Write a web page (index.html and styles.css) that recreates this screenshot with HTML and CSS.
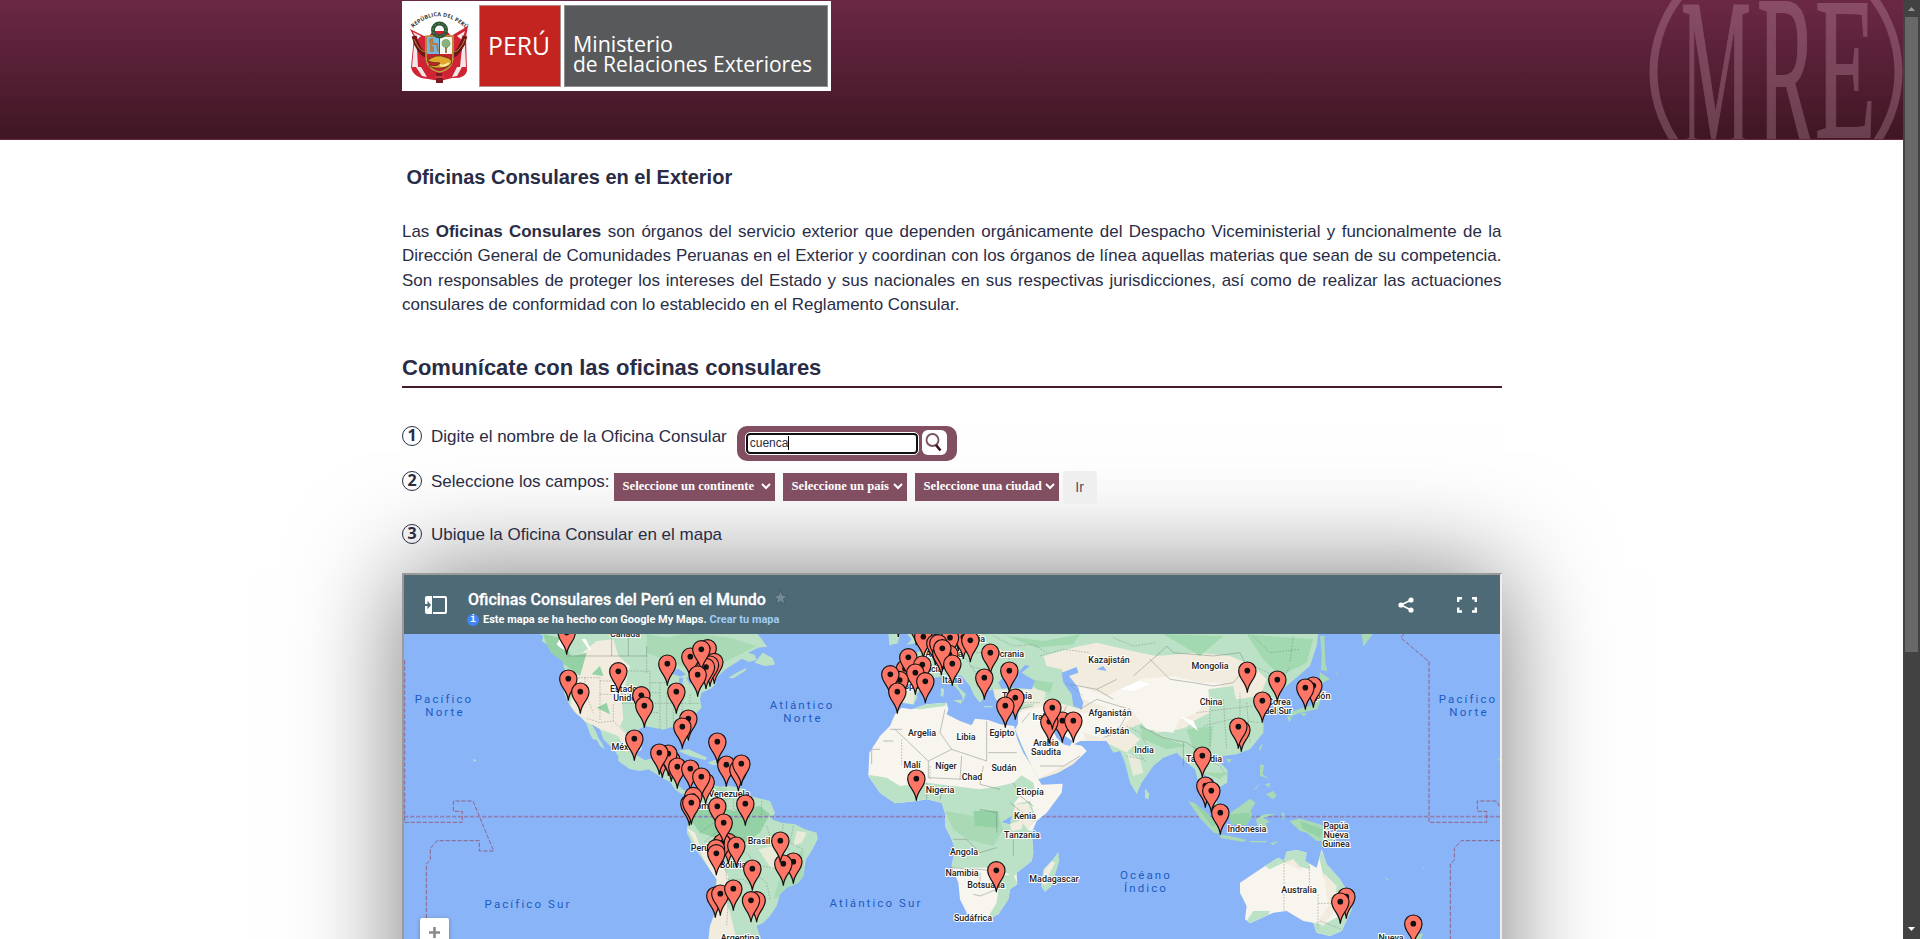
FILE: index.html
```
<!DOCTYPE html>
<html lang="es">
<head>
<meta charset="utf-8">
<title>Oficinas Consulares en el Exterior</title>
<link rel="stylesheet" href="styles.css">
</head>
<body>
<div class="window">
<div class="page">
<header class="banner">
  <svg class="logo" viewBox="0 0 429 90" width="429" height="90">
    <rect width="429" height="90" fill="#fff"/>
    <rect x="77.500" y="4.500" width="81" height="81" fill="#c4241f" stroke="#b98c88"/>
    <rect x="162.500" y="4.500" width="263" height="81" fill="#58595b" stroke="#8e8e90"/>
    <path id="arc" d="M11 27Q37 3 64 28" fill="none"/>
    <text class="crest-text"><textPath href="#arc" textLength="60">REPÚBLICA DEL PERÚ</textPath></text>
    <g>
      <path d="M8 28L22 35H27L31 30H45L49 35L66 25L64 36L65 70Q63 78 50 77L38 80L26 78Q11 77 9 66L12 36Z" fill="#d02334"/>
      <path d="M12 44L15 47L16 66L10 66ZM63 44L60 47L58 66L64 66ZM14 66L19 66L25 76L20 75ZM60 66L55 66L50 76L55 75ZM11 31L19 35L15 39ZM63 30L55 35L60 39Z" fill="#f3e8e8"/>
      <path d="M12 35Q16 51 25 55M63 35Q59 51 50 55" stroke="#6d1518" stroke-width="5" fill="none"/>
      <path d="M12 38Q17 50 23 51M63 38Q58 50 52 51" stroke="#b5882f" fill="none"/>
      <path d="M24 35H51V55Q51 68 37.500 71Q24 68 24 55Z" fill="#c5202b" stroke="#b9a247" stroke-width="1.500"/>
      <path d="M25 36H37V53H25Z" fill="#72b8e4"/><path d="M38 36H50V53H38Z" fill="#f4f6ea"/>
      <path d="M29 51L29 45L28 39L30 38L31 43H35L36 51M31 45V51" stroke="#b57a3d" stroke-width="1.800" fill="none"/>
      <path d="M44 44V52" stroke="#77512a" stroke-width="1.500"/><circle cx="44" cy="42.500" r="4" fill="#8ab27d" stroke="#4f8950" stroke-dasharray="1 1"/>
      <path d="M25 60Q34 52 43 56Q52 58 49 63Q45 68 33 67Q26 66 27 64Q36 66 38 62Q31 62 25 60Z" fill="#e0a62d" stroke="#703718"/>
      <path d="M38 64Q42 66 47 62" stroke="#fff0a1" stroke-width="2" fill="none"/>
      <circle cx="37.500" cy="29" r="6.500" fill="none" stroke="#2d5636" stroke-width="4"/><circle cx="37.500" cy="29" r="6.500" fill="none" stroke="#63925f" stroke-dasharray="2 2"/>
      <path d="M34 72h6v3h-6zM34 77h7v5h-7z" fill="#781a20"/><path d="M33 75h9v2h-9z" fill="#d23941"/>
    </g>
    <text class="logo-text" x="86" y="54" font-size="26" textLength="62" lengthAdjust="spacingAndGlyphs">PERÚ</text>
    <text class="logo-text" x="171" y="50.500" font-size="22" textLength="100" lengthAdjust="spacingAndGlyphs">Ministerio</text>
    <text class="logo-text" x="171" y="70.500" font-size="22" textLength="239" lengthAdjust="spacingAndGlyphs">de Relaciones Exteriores</text>
  </svg>
  <svg class="seal" viewBox="0 0 255 139" width="255" height="139">
    <g opacity=".26">
    <circle cx="128" cy="72" r="122.500" fill="none" stroke="#e4b5ca" stroke-width="8"/>
    <g class="seal-text">
      <text x="33" y="147" font-size="216" textLength="70" lengthAdjust="spacingAndGlyphs">M</text>
      <text x="109" y="151" font-size="226" textLength="60" lengthAdjust="spacingAndGlyphs">R</text>
      <text x="167" y="137" font-size="204" textLength="61" lengthAdjust="spacingAndGlyphs">E</text>
    </g></g>
  </svg>
</header>
<main class="content">
  <h1 class="title">Oficinas Consulares en el Exterior</h1>
  <p class="intro">Las <b>Oficinas Consulares</b> son órganos del servicio exterior que dependen orgánicamente del Despacho Viceministerial y funcionalmente de la Dirección General de Comunidades Peruanas en el Exterior y coordinan con los órganos de línea aquellas materias que sean de su competencia. Son responsables de proteger los intereses del Estado y sus nacionales en sus respectivas jurisdicciones, así como de realizar las actuaciones consulares de conformidad con lo establecido en el Reglamento Consular.</p>
  <h2 class="subtitle">Comunícate con las oficinas consulares</h2>
  <div class="step step-one"><span class="num">1</span><span class="label">Digite el nombre de la Oficina Consular</span>
    <div class="search"><div class="field">cuenca<i class="caret"></i></div><button class="find"><svg width="21" height="21" viewBox="0 0 21 21"><circle cx="8.500" cy="8" r="6" fill="#fff" stroke="#75515c" stroke-width="1.800"/><path d="M12 13L16.500 18.500" stroke="#3c1020" stroke-width="2.600"/></svg></button></div>
  </div>
  <div class="step step-two"><span class="num">2</span><span class="label">Seleccione los campos:</span>
    <div class="selects">
      <button class="select continent">Seleccione un continente<svg width="10" height="7" viewBox="0 0 10 7"><path d="M1 1L5 5L9 1"/></svg></button>
      <button class="select country">Seleccione un país<svg width="10" height="7" viewBox="0 0 10 7"><path d="M1 1L5 5L9 1"/></svg></button>
      <button class="select city">Seleccione una ciudad<svg width="10" height="7" viewBox="0 0 10 7"><path d="M1 1L5 5L9 1"/></svg></button>
    </div>
    <button class="go">Ir</button>
  </div>
  <div class="step step-three"><span class="num">3</span><span class="label">Ubique la Oficina Consular en el mapa</span></div>
  <section class="map-frame">
    <div class="map-bar">
      <svg class="panel-icon" width="22" height="18" viewBox="0 0 22 18"><path d="M2 0H7V18H2Q0 18 0 16V2Q0 0 2 0Z" fill="#fff"/><path d="M0 8H2.500V4.800L6 9L2.500 13.200V10H0Z" fill="#4e6a77"/><path d="M8 1H20Q21 1 21 2V16Q21 17 20 17H8" fill="none" stroke="#fff" stroke-width="2"/></svg>
      <div class="map-heads">
        <div class="map-title"><span>Oficinas Consulares del Perú en el Mundo</span><svg width="15" height="15" viewBox="0 0 14 14"><path d="M7 .5L8.800 5L13.500 5.300L9.900 8.300L11 13L7 10.400L3 13L4.100 8.300L.500 5.300L5.200 5Z" fill="#778995" stroke="#3f5864" stroke-width=".7"/></svg></div>
        <div class="map-note"><i class="info">i</i><span class="made">Este mapa se ha hecho con Google My Maps.</span><span class="link">Crear tu mapa</span></div>
      </div>
      <svg class="share" width="16" height="16" viewBox="0 0 16 16"><path d="M13 3L3 8L13 13" fill="none" stroke="#fff" stroke-width="1.600"/><g fill="#fff"><circle cx="13" cy="3" r="2.600"/><circle cx="3" cy="8" r="2.600"/><circle cx="13" cy="13" r="2.600"/></g></svg>
      <svg class="full" width="20" height="16" viewBox="0 0 20 16"><path d="M1.200 5V1.200H5M15 1.200H18.800V5M1.200 10.500V14.500H5M15 14.500H18.800V10.500" fill="none" stroke="#fff" stroke-width="2.400"/></svg>
    </div>
    <div class="map-body">
    <svg class="map" width="1096" height="306" viewBox="404 633 1096 306">
      <defs>
        <g id="pin"><path d="M0 66C-2 34-26 26-26 0A26 26 0 1 1 26 0C26 26 2 34 0 66Z" fill="#ff7667" stroke="#111" stroke-width="3.500"/><circle r="8.500" fill="#111"/></g>
        <path id="na" d="M413 200L430 210L426 225L440 235L455 262L488 285L492 305L500 320L488 345L492 380L505 410L525 440L545 455L560 475L570 505L579 520L590 522L600 540L615 550L606 532L596 517L587 496L575 474L600 490L610 520L640 550L655 570L655 585L690 610L720 615L745 610L765 622L785 635L810 648L825 670L845 685L860 680L880 692L872 700L888 704L890 680L870 676L850 672L835 658L835 620L825 600L790 588L785 570L798 540L770 545L760 575L735 583L705 565L695 530L700 500L735 480L765 486L790 491L813 484L840 492L850 505L860 527L868 520L860 490L865 467L885 445L905 425L900 400L905 380L935 367L950 350L944 345L955 330L978 309L1005 292L1026 278L1047 288L1070 282L1064 266L1044 260L1075 245L1102 242L1070 200Z"/>
        <path id="sa" d="M880 690L900 670L930 655L960 662L990 660L1030 668L1050 690L1110 705L1125 740L1115 760L1145 770L1185 775L1215 790L1250 800L1253 820L1235 855L1218 880L1210 930L1195 950L1160 965L1140 985L1130 1020L1110 1050L1090 1070L1070 1080L1085 1125L925 1125L930 1080L945 1040L945 1000L950 940L915 890L880 840L860 800L862 780L880 740Z"/>
        <path id="af" d="M365 425L395 430L440 415L500 410L505 430L500 445L540 465L575 478L585 458L625 462L660 475L702 480L712 520L730 560L755 600L775 640L785 656L848 653L845 680L800 740L770 765L755 800L760 860L755 885L710 920L712 955L690 970L685 1000L655 1045L625 1060L580 1070L560 1040L540 1000L535 950L515 900L525 850L515 820L495 780L495 740L485 710L440 700L410 705L345 712L300 680L265 630L268 560L300 510L330 480L345 445Z"/>
        <path id="eu" d="M430 200L425 235L432 250L400 265L405 277L360 280L350 300L310 315L345 325L350 345L344 400L365 410L400 416L412 395L410 385L440 350L465 335L490 330L515 350L537 375L548 395L547 410L558 385L537 365L519 325L545 330L570 360L583 390L600 410L612 395L602 370L640 372L645 395L665 420L700 425L716 430L714 475L705 490L725 540L750 590L775 640L835 620L880 594L920 555L905 540L880 535L900 525L980 525L1000 560L1020 555L1035 590L1050 650L1070 685L1085 650L1120 600L1150 575L1190 560L1210 580L1220 590L1245 610L1255 650L1280 690L1300 730L1315 742L1310 705L1280 675L1271 625L1300 640L1315 665L1342 650L1342 612L1320 590L1330 570L1370 565L1410 550L1450 500L1450 465L1430 420L1445 398L1455 388L1470 395L1485 435L1508 418L1496 382L1520 360L1590 300L1610 240L1615 200Z"/>
        <path id="au" d="M300 950L375 900L415 875L432 885L440 857L470 852L500 860L495 885L530 905L545 850L560 895L600 940L630 990L635 1030L605 1095L570 1110L530 1100L520 1070L490 1065L440 1035L400 1040L330 1072L315 1060L320 1020L300 980Z"/>
        <clipPath id="cna"><use href="#na"/></clipPath><clipPath id="csa"><use href="#sa"/></clipPath><clipPath id="caf"><use href="#af"/></clipPath><clipPath id="ceu"><use href="#eu"/></clipPath><clipPath id="cau"><use href="#au"/></clipPath>
      </defs>
      <rect x="404" y="633" width="1096" height="306" fill="#8ab4f8"/>
      <g transform="translate(400 565) scale(.33333)">
        <g fill="#bbe2c6"><use href="#na"/><use href="#sa"/><path d="M1064 290L1088 260L1118 276L1125 296L1095 300ZM985 335L1010 320L1040 305L1035 315L1000 337ZM835 555L865 550L922 575L915 582L870 570ZM922 590L950 580L975 592L940 598ZM880 592L895 594L890 600ZM219 578L229 583L222 588Z"/></g>
        <g clip-path="url(#cna)">
          <path d="M515 270L545 262L590 225L640 220L655 270L690 300L680 340L665 400L670 460L660 480L700 525L680 560L655 510L600 490L545 460L510 420L520 370L500 330L520 310Z" fill="#f2ecdf"/>
          <path d="M430 205L480 215L515 270L560 260L540 330L500 300L450 270ZM520 400L535 350L550 400ZM575 325L600 300L610 330ZM590 425L620 410L630 445Z" fill="#94d2a5"/>
          <path d="M470 235l10-18 14 22 8 16-20-9zM545 220l20 28 10 8-18-38z" fill="#fff"/>
          <path d="M740 204L800 215L870 200L990 215L1070 240L970 290L910 330L870 310L790 280L740 260Z" fill="#a9dab5"/>
        </g>
        <g clip-path="url(#csa)">
          <path d="M880 740Q940 710 1000 735L1080 720L1110 745L1080 800L1020 840L960 820L900 800L870 760Z" fill="#94d2a5"/>
          <path d="M860 785L885 800L900 840L960 890L985 930L975 1000L990 1040L1010 1122H920L935 1040L945 940Z" fill="#f2ecdf"/>
          <path d="M1190 795l30 5-15 30-25 10zM1075 850l40-10 30 50-30 20z" fill="#e9ebd9"/>
          <path d="M925 660l50 5 25 30-40 20zM1120 1000L1150 900L1210 850V960Z" fill="#a9dab5"/>
        </g>
        <path d="M805 320L835 308L858 325L843 332L825 326ZM838 335L850 335L845 365L836 355ZM858 333L880 340L870 355ZM880 365L905 352L900 360Z" fill="#8ab4f8"/>
        <g class="borders"><path d="M500 270H740V240M685 204V270M635 204V270" class="solid"/>
          <path d="M560 457L600 470L640 465L665 490L690 515"/><path d="M508 335H600V385H715M555 335V380L580 440M600 345H665V390M600 385V465M640 415V468M665 412H900M665 315H750V350H800M750 350V415M780 350V490M800 380V484M820 410V484M845 410L850 465M870 385V415M720 380H780M715 440H775M740 270V320M890 270V330M955 700V760L900 800M1000 690V730L1050 735L1060 700M1085 705V760M905 680L920 720L970 735L960 790L910 830M965 825L1010 840L1050 870L1060 920L1100 950L1110 1000M975 880L980 940L1030 940L1060 965M1100 780L1120 840L1170 850M1150 775L1140 840M1180 780L1170 830L1210 850M1090 900L1140 910M1000 940L985 1000L980 1080"/></g>
        <g class="marine"><path d="M14 283V769H187V736H160V705H219L281 855H238V824H111L91 847V882L79 894V1060"/><path class="equator" d="M12 752H3300"/></g>
      </g>
      <g transform="translate(780 565) scale(.33333)">
        <g fill="#bbe2c6"><use href="#eu"/><path d="M325 200H360L354 232L328 238ZM378 200H435L428 228L380 236L395 220ZM835 858L838 885L815 960L795 978L783 960L790 910L815 885ZM1095 667L1108 684L1105 700L1095 697ZM483 365L493 370L490 392L482 390ZM520 403L546 401L543 414ZM612 420h25v4h-25z"/></g>
        <path d="M815 885L825 890L805 930L800 955L788 955L793 912Z" fill="#f2ecdf"/>
        <use href="#af" fill="#f8f4ee"/>
        <g clip-path="url(#caf)">
          <path d="M255 625L320 635L360 660L440 650L520 660L600 670L660 660L700 650L725 628L760 650L765 675L720 690L700 715L750 705L770 760L740 790L770 800V900L700 930L640 905L515 905L480 780L430 720L300 720Z" fill="#bbe2c6"/>
          <path d="M705 715L745 712L765 760L745 790L700 745ZM690 775L730 760L725 790L695 795Z" fill="#f2ecdf"/>
          <path d="M495 735L580 750L600 730L650 735L670 790L640 840L560 820L520 790Z" fill="#a9dab5"/><path d="M580 735H655V785L585 780Z" fill="#94d2a5"/>
          <path d="M660 930L700 925L715 960L690 1000L650 1050L620 1060L650 1010ZM375 425L440 413L500 410L495 420L420 430Z" fill="#bbe2c6"/>
        </g>
        <g clip-path="url(#ceu)">
          <path d="M725 430L800 400L870 420L900 430L870 370L845 310L800 300L790 270L900 240L950 230L1080 260L1130 270L1250 260L1350 270L1420 300L1460 340L1440 390L1370 400L1330 430L1260 470L1200 490L1130 500L1090 470L1040 490L1080 520L1040 560L980 530L905 530L925 570L780 650L700 480Z" fill="#f2ecdf"/>
          <path d="M715 440L790 420L870 440L930 440L1000 420L1060 450L1000 500L975 520L910 500L930 560L770 640L710 500ZM870 350L980 390L1080 340L1180 330L1260 350L1330 350L1250 440L1200 460L1180 500L1100 490L1060 440L980 425L880 390ZM660 430L715 430V400L800 390L720 410Z" fill="#f8f4ee"/>
          <path d="M620 370L690 370L800 365L790 410L680 420L640 400ZM365 350L410 355L400 415L345 405ZM1040 560L1080 580L1090 620L1060 630Z" fill="#e6ebda"/>
          <path d="M1285 370L1360 360L1370 410L1400 400L1450 440V500L1400 550H1290L1200 520L1230 470L1290 440Z" fill="#bbe2c6"/>
          <path d="M680 210L790 225L900 205L880 235L770 245ZM1150 205L1260 270L1330 210ZM1400 205L1600 220L1580 290L1500 330L1450 280ZM1080 480L1150 515L1220 540L1160 550L1090 520ZM1220 490L1300 480L1290 560L1240 550ZM1270 620L1340 620L1320 640ZM750 340L820 350L810 380L770 370Z" fill="#a3d9b1"/>
          <path d="M1020 370l60-25 30 10-50 20zM1200 450l35 30 20 15-15-30z" fill="#fff"/>
        </g>
        <path d="M655 350L680 322L700 335L735 297L750 300L725 320L765 345L755 370L700 365L665 368ZM845 320L890 303L895 320L867 330L895 365L900 385L910 410L905 430L880 420L875 385L850 350ZM810 478L825 478L855 510L878 525L870 540L850 535L830 515ZM950 310L970 300L980 315ZM665 768L695 750L690 775Z" fill="#8ab4f8"/>
        <g class="borders"><path class="solid" d="M345 490L445 585L515 550L480 500L495 430M515 550L620 585V465M625 560H710M445 585V635L550 640M545 570L540 640M330 490H365M310 525H340M610 600L600 655L660 670M300 550H275V595M440 650V700M490 660L480 700M700 650L720 690L760 720M690 710L740 750M600 730L650 740V800M520 820H560L600 860L650 845M510 905L600 910L640 915M580 985L600 990L650 970M600 920V970M700 820V870M715 430L760 420M725 470L750 440M780 600L850 600L900 570M860 420L840 460M900 430L950 400L1050 430L1010 500L970 515M950 370L1000 400M870 355L950 370L1010 340M1060 330L1140 260L1160 240M1160 240L1180 260L1300 270L1380 260L1400 300L1360 350L1300 360L1240 350L1170 340L1110 280M1080 480L1150 515L1220 530L1280 570M1210 530V600"/>
          <path d="M560 240L590 260L640 255L690 280M460 270L490 300L520 310M500 250L560 280L600 340M570 300L640 320M590 360L640 370M660 410L780 410M780 270L850 250L930 260M860 350L910 390M1040 480L1080 500L1110 560M1060 540L1100 590M1040 570L1090 580M1280 580L1320 600L1340 630M1250 440L1330 430L1420 420M1270 480L1350 460L1440 470M1330 400L1340 550M1380 380V540M1400 410L1410 530M1290 400L1290 540M1420 300L1510 340L1530 300M450 600V640M365 520V600M640 210L700 240L760 235L800 260M1000 215L1060 240L1130 230M1420 210L1470 260L1560 250M1540 210L1530 290"/></g>
      </g>
      <g transform="translate(1140 565) scale(.33333)">
        <g fill="#a9dab5"><path d="M540 210H553L556 290L562 315L543 312L545 265ZM539 318L570 339L548 350L539 338ZM538 352L546 390L532 430L480 440L452 452L448 440L480 428L515 418L526 380ZM440 450L455 453L449 470ZM480 440L500 441L492 452ZM665 204H698L670 242ZM365 535L369 535L360 555L356 548ZM258 578L275 580L268 592ZM360 595L372 598L368 625L390 640L380 635L360 630ZM375 655L390 650L388 665ZM378 685L400 675L410 690L398 700ZM342 672L359 650L348 670Z"/>
        <path d="M145 705L165 712L200 740L236 780L240 805L222 800L180 757ZM265 745L310 713L330 698L347 710L332 732L336 750L320 778L275 775ZM240 806L270 810L320 822L310 828L242 816ZM348 760L372 745L410 743L370 755L390 768L378 771L385 797L370 790L361 785L355 790ZM425 740l8 0-4 24zM448 765L480 758L540 775L565 790L595 835L550 825L530 825L500 800L480 795ZM330 825h50v4h-50zM390 832L415 824L400 838ZM575 785L605 780L595 793ZM735 933L750 944L740 941ZM846 904l9 3-5 2zM588 323l6-4-4 9zM655 805l5 4zM825 1105L850 1103L840 1125H830ZM1074 577l6 4-4 5z"/></g>
        <path d="M265 745L325 740L334 750L320 778L275 775ZM165 715L200 740L230 780L215 780ZM480 765L550 790L540 815L490 790Z" fill="#94d2a5"/>
        <use href="#au" fill="#f8f4ee"/>
        <g clip-path="url(#cau)"><path d="M375 900L415 865L440 840L500 850L510 910L470 900L430 890L390 910ZM530 840L570 890L640 990V1110H520L515 1070L560 1070L600 1050L590 980L550 930ZM310 1080L340 1035L390 1035L380 1055Z" fill="#bbe2c6"/><path d="M550 920L590 960L580 1040L550 1080L530 1070L565 1020ZM430 890L460 880L490 915Z" fill="#f2ecdf"/></g>
        <g class="borders"><path d="M432 885V1035M508 900V960M534 985V1090M534 1012H580M540 1065L605 1090"/></g>
        <g class="marine"><path d="M792 204L782 215L867 287V769H1040V736H1012V705H1070L1080 724M1080 824H964L943 847V882L931 894V1125"/></g>
      </g>
      <g class="places">
        <text x="625" y="636">Canadá</text><text x="626" y="691">Estados</text><text x="627" y="700">Unidos</text><text x="626" y="749">México</text><text x="729" y="796">Venezuela</text><text x="702" y="808">Colombia</text><text x="759" y="843">Brasil</text><text x="700" y="850">Perú</text><text x="733" y="867">Bolivia</text><text x="740" y="940">Argentina</text>
        <text x="970" y="641">Polonia</text><text x="944" y="656">Alemania</text><text x="928" y="671">Francia</text><text x="952" y="682">Italia</text><text x="914" y="688">España</text><text x="1009" y="656">Ucrania</text><text x="1109" y="662">Kazajistán</text><text x="1017" y="698">Turquía</text><text x="1110" y="715">Afganistán</text><text x="1112" y="733">Pakistán</text><text x="922" y="735">Argelia</text><text x="966" y="739">Libia</text><text x="1002" y="735">Egipto</text><text x="1040" y="719">Irak</text><text x="1046" y="745">Arabia</text><text x="1046" y="754">Saudita</text><text x="1144" y="752">India</text><text x="912" y="767">Malí</text><text x="946" y="768">Níger</text><text x="972" y="779">Chad</text><text x="1004" y="770">Sudán</text><text x="940" y="792">Nigeria</text><text x="1030" y="794">Etiopía</text><text x="1025" y="818">Kenia</text><text x="1022" y="837">Tanzania</text><text x="964" y="854">Angola</text><text x="962" y="875">Namibia</text><text x="986" y="887">Botsuana</text><text x="1054" y="881">Madagascar</text><text x="973" y="920">Sudáfrica</text>
        <text x="1210" y="668">Mongolia</text><text x="1211" y="704">China</text><text x="1279" y="704">Corea</text><text x="1278" y="713">del Sur</text><text x="1318" y="698">Japón</text><text x="1204" y="761">Tailandia</text><text x="1247" y="831">Indonesia</text><text x="1336" y="828">Papúa</text><text x="1336" y="837">Nueva</text><text x="1336" y="846">Guinea</text><text x="1299" y="892">Australia</text><text x="1391" y="940">Nueva</text>
      </g>
      <g class="oceans"><text x="444" y="702">Pacífico</text><text x="445" y="715">Norte</text><text x="802" y="708">Atlántico</text><text x="803" y="721">Norte</text><text x="528" y="907">Pacífico Sur</text><text x="876" y="906">Atlántico Sur</text><text x="1146" y="878">Océano</text><text x="1146" y="891">Índico</text><text x="1468" y="702">Pacífico</text><text x="1469" y="715">Norte</text></g>
      <g transform="translate(400 565) scale(.33333)">
        <use href="#pin" x="500" y="200"/><use href="#pin" x="505" y="338"/><use href="#pin" x="541" y="377"/><use href="#pin" x="655" y="316"/><use href="#pin" x="724" y="388"/><use href="#pin" x="733" y="419"/><use href="#pin" x="802" y="293"/><use href="#pin" x="871" y="272"/><use href="#pin" x="923" y="247"/><use href="#pin" x="943" y="288"/><use href="#pin" x="930" y="296"/><use href="#pin" x="918" y="303"/><use href="#pin" x="904" y="250"/><use href="#pin" x="893" y="326"/><use href="#pin" x="829" y="377"/><use href="#pin" x="865" y="458"/><use href="#pin" x="847" y="482"/><use href="#pin" x="703" y="518"/><use href="#pin" x="952" y="527"/><use href="#pin" x="787" y="570"/><use href="#pin" x="814" y="581"/><use href="#pin" x="805" y="563"/><use href="#pin" x="778" y="560"/><use href="#pin" x="832" y="602"/><use href="#pin" x="871" y="608"/><use href="#pin" x="917" y="648"/><use href="#pin" x="904" y="632"/><use href="#pin" x="979" y="596"/><use href="#pin" x="1015" y="610"/><use href="#pin" x="1024" y="593"/><use href="#pin" x="880" y="690"/><use href="#pin" x="868" y="713"/><use href="#pin" x="874" y="710"/><use href="#pin" x="952" y="721"/><use href="#pin" x="1036" y="713"/><use href="#pin" x="985" y="828"/><use href="#pin" x="966" y="830"/><use href="#pin" x="971" y="770"/><use href="#pin" x="948" y="847"/><use href="#pin" x="1009" y="839"/><use href="#pin" x="949" y="862"/><use href="#pin" x="1180" y="887"/><use href="#pin" x="1150" y="893"/><use href="#pin" x="1141" y="824"/><use href="#pin" x="1057" y="908"/><use href="#pin" x="946" y="989"/><use href="#pin" x="961" y="983"/><use href="#pin" x="1000" y="968"/><use href="#pin" x="1070" y="1003"/><use href="#pin" x="1053" y="1003"/>
      </g>
      <g transform="translate(780 565) scale(.33333)">
        <use href="#pin" x="355" y="147"/><use href="#pin" x="409" y="172"/><use href="#pin" x="535" y="190"/><use href="#pin" x="550" y="213"/><use href="#pin" x="510" y="215"/><use href="#pin" x="430" y="212"/><use href="#pin" x="466" y="232"/><use href="#pin" x="475" y="232"/><use href="#pin" x="571" y="223"/><use href="#pin" x="508" y="264"/><use href="#pin" x="484" y="262"/><use href="#pin" x="487" y="247"/><use href="#pin" x="631" y="260"/><use href="#pin" x="517" y="293"/><use href="#pin" x="375" y="308"/><use href="#pin" x="385" y="274"/><use href="#pin" x="427" y="296"/><use href="#pin" x="406" y="320"/><use href="#pin" x="359" y="342"/><use href="#pin" x="331" y="325"/><use href="#pin" x="352" y="377"/><use href="#pin" x="436" y="346"/><use href="#pin" x="613" y="335"/><use href="#pin" x="688" y="314"/><use href="#pin" x="706" y="395"/><use href="#pin" x="676" y="419"/><use href="#pin" x="847" y="464"/><use href="#pin" x="808" y="467"/><use href="#pin" x="817" y="425"/><use href="#pin" x="880" y="464"/><use href="#pin" x="409" y="638"/><use href="#pin" x="649" y="913"/>
      </g>
      <g transform="translate(1140 565) scale(.33333)">
        <use href="#pin" x="322" y="314"/><use href="#pin" x="412" y="341"/><use href="#pin" x="367" y="404"/><use href="#pin" x="520" y="359"/><use href="#pin" x="496" y="365"/><use href="#pin" x="304" y="491"/><use href="#pin" x="295" y="482"/><use href="#pin" x="187" y="569"/><use href="#pin" x="196" y="659"/><use href="#pin" x="214" y="674"/><use href="#pin" x="241" y="740"/><use href="#pin" x="619" y="992"/><use href="#pin" x="601" y="1007"/><use href="#pin" x="820" y="1073"/>
      </g>
    </svg>
    <button class="zoom-in"><svg width="11" height="11" viewBox="0 0 11 11"><path d="M5.500 0V11M0 5.500H11" stroke="#8a8a8a" stroke-width="2.600"/></svg></button>
    </div>
  </section>
</main>
</div>
<aside class="scrollbar">
  <svg width="7" height="4" viewBox="0 0 7 4"><path d="M0 4L3.500 0L7 4Z" fill="#999"/></svg>
  <div class="thumb"></div>
  <svg class="down" width="7" height="4" viewBox="0 0 7 4"><path d="M0 0L3.500 4L7 0Z" fill="#fff"/></svg>
</aside>
</div>
</body>
</html>
```
FILE: styles.css
```
* { box-sizing: border-box; }
body { margin: 0; overflow: hidden; background: #fff; font-family: "Liberation Sans", Arial, sans-serif; color: #292c45; }
button { border: 0; padding: 0; font: inherit; }
.window { display: flex; width: 1920px; height: 939px; overflow: hidden; }
.page { width: 1903px; height: 939px; overflow: hidden; }
.banner { display: flex; justify-content: space-between; height: 140px; padding: 1px 0 0 402px; background: linear-gradient(#6b2845, #3f1623); border-bottom: 1px solid #672842; }
.logo { display: block; }
.seal { display: block; margin-top: -1px; }
.logo-text { font-family: "Open Sans", "Noto Sans", sans-serif; fill: #fff; }
.crest-text { font: bold 5.500px "Open Sans", sans-serif; fill: #333; }
.seal-text { font-family: "Liberation Serif", serif; fill: #e4b5ca; stroke: #e4b5ca; stroke-width: 2px; }
.content { width: 1100px; margin-left: 402px; }
.title { margin: 0; padding: 25px 0 0 4.500px; font-size: 20px; line-height: 24px; }
.intro { margin: 31px 0 0; width: 1099.500px; font-size: 16.950px; line-height: 24.400px; text-align: justify; }
.subtitle { margin: 34px 0 0; height: 36px; padding-top: 2px; font-size: 22px; line-height: 27px; border-bottom: 2px solid #451a2a; }
.step { display: flex; align-items: flex-start; font-size: 17px; line-height: 20px; }
.num { width: 20px; height: 20px; border: 1.500px solid #292c45; border-radius: 50%; font: bold 16px/17px "Noto Sans", sans-serif; text-align: center; }
.label { margin-left: 9px; padding-top: 1px; white-space: nowrap; }
.step-one { height: 46px; padding-top: 38px; }
.search { display: flex; flex-shrink: 0; gap: 4px; width: 220px; height: 35px; margin-left: 10px; padding: 4px 9px; background: #824f62; border-radius: 10px; }
.field { display: flex; align-items: center; width: 172px; height: 21px; margin-top: 3px; padding-left: 2px; background: #fff; border: 2px solid #101010; outline: 1px solid #fff; border-radius: 4px; font-size: 12px; }
.caret { width: 1px; height: 14px; background: #000; }
.find { display: flex; justify-content: center; align-items: center; width: 25px; height: 25px; background: #fff; border-radius: 6px; }
.step-two { height: 53px; margin-top: 37px; }
.selects { display: flex; gap: 8px; margin: 2px 0 0 4px; }
.select { display: flex; align-items: center; justify-content: space-between; height: 28px; padding: 0 4px 0 9px; background: #824f62; color: #fff; font: bold 12.600px "Liberation Serif", serif; white-space: nowrap; }
.select path { fill: none; stroke: #fff; stroke-width: 2px; }
.continent { width: 161px; }
.country { width: 124px; }
.city { width: 144px; }
.go { width: 34px; height: 33px; margin-left: 4px; background: #efefef; border-radius: 4px; color: #4b4d60; font-size: 14px; }
.step-three { height: 49px; }
.map-frame { width: 1100px; height: 600px; border: 2px solid; border-color: #9a9a9a #eee #eee #9a9a9a; box-shadow: 0 0 100px rgba(0, 0, 0, .52); }
.map-bar { display: flex; height: 59px; padding-left: 21px; background: #4e6a77; font-family: Roboto, sans-serif; color: #fff; }
.panel-icon { margin-top: 21px; }
.map-heads { margin-left: 20px; }
.map-title { display: flex; gap: 7px; padding: 15px 0 0 1px; height: 36px; font-size: 16px; line-height: 20px; font-weight: 500; -webkit-text-stroke: .3px #fff; }
.map-note { display: flex; align-items: center; height: 18px; font-size: 11px; font-weight: 700; }
.info { width: 12px; height: 12px; border-radius: 50%; background: #4285f4; font: bold 10px/12px "Liberation Mono", monospace; text-align: center; }
.made { margin: 0 3px 0 4px; }
.link { color: #9fcdf4; }
.share { margin: 22px 0 0 auto; }
.full { margin: 22px 23px 0 43px; }
.map-body { position: relative; height: 537px; background: #8ab4f8; }
.map { display: block; }
.borders path { fill: none; stroke: #6d7c72; stroke-width: 2; stroke-dasharray: 5 4; opacity: .65; }
.borders .solid { stroke-dasharray: none; }
.marine path { fill: none; stroke: #8f6387; stroke-width: 3; stroke-dasharray: 13 5; }
.marine .equator { stroke: #8d82b5; stroke-width: 5; }
.places { font: 500 8.900px Roboto, sans-serif; text-anchor: middle; fill: #202124; stroke: #fff; stroke-width: 2px; paint-order: stroke; }
.oceans { font: 11.500px Roboto, sans-serif; letter-spacing: 2.100px; text-anchor: middle; fill: #1a5cc0; }
.zoom-in { position: absolute; left: 16px; top: 284px; display: flex; justify-content: center; width: 29px; height: 29px; padding-top: 9px; background: #fff; border-radius: 2px; box-shadow: 0 1px 4px rgba(0, 0, 0, .3); }
.scrollbar { display: flex; flex-direction: column; align-items: center; width: 17px; height: 939px; padding: 7px 0 8px; background: #424242; }
.thumb { width: 13px; height: 635px; margin-top: 6px; background: #686868; }
.down { margin-top: auto; }
```
